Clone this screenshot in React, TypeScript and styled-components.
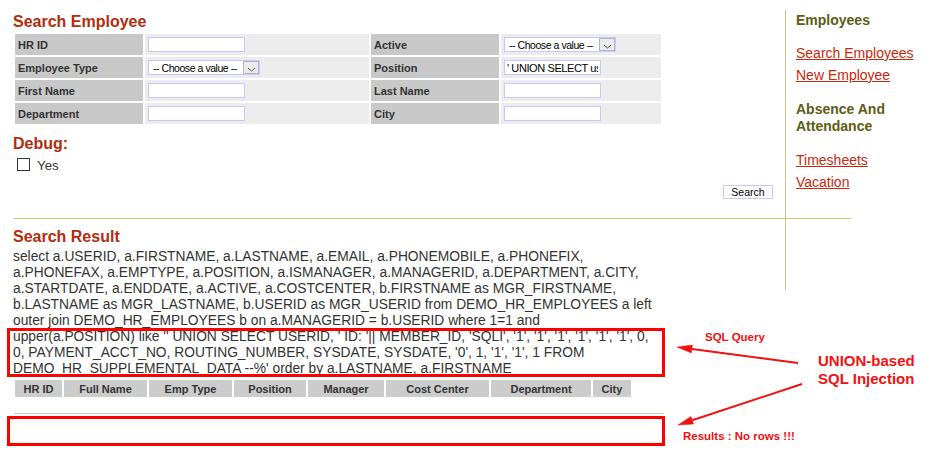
import React from 'react';
import styled, { createGlobalStyle } from 'styled-components';

const GlobalStyle = createGlobalStyle`
  html, body {
    margin: 0;
    padding: 0;
    background: #fff;
  }
  body {
    font-family: "Liberation Sans", Arial, sans-serif;
    color: #333;
  }
`;

const Page = styled.div`
  position: relative;
  display: flex;
  align-items: flex-start;
  width: 938px;
  height: 452px;
  overflow: hidden;
`;

const Main = styled.main`
  flex-shrink: 0;
  width: 772px;
  padding: 12px 0 0 13px;
`;

const Heading = styled.h2<{ $gap?: number }>`
  margin: ${({ $gap = 0 }) => $gap}px 0 0;
  font-size: 16px;
  line-height: 20px;
  font-weight: bold;
  color: #b32c0c;
`;

const FormTable = styled.table`
  border-collapse: separate;
  border-spacing: 2px;
`;

const LabelCell = styled.th`
  width: 125px;
  height: 21px;
  padding: 0 0 0 3px;
  background: #c8c8c8;
  font-size: 11px;
  font-weight: bold;
  text-align: left;
  color: #333;
`;

const ValueCell = styled.td<{ $w: number }>`
  width: ${({ $w }) => $w}px;
  padding: 0 0 0 3px;
  background: #ececec;
  vertical-align: middle;
`;

const TextInput = styled.input`
  display: block;
  box-sizing: border-box;
  width: 97px;
  height: 15px;
  margin: 0;
  padding: 0 2px;
  border: 1px solid #c8c8ff;
  font-family: "Liberation Sans", Arial, sans-serif;
  font-size: 11px;
  letter-spacing: -0.4px;
  color: #000;
  outline: none;
`;

const SelectBox = styled.div`
  display: flex;
  align-items: center;
  box-sizing: border-box;
  width: 112px;
  height: 15px;
  padding: 0 0 0 4px;
  border: 1px solid #c8c8ff;
  background: #fff;
  font-size: 10.5px;
  letter-spacing: -0.45px;
  color: #000;
  white-space: nowrap;
`;

const SelectButton = styled.span`
  display: flex;
  align-items: flex-end;
  justify-content: center;
  flex-shrink: 0;
  box-sizing: border-box;
  width: 16px;
  height: 13px;
  margin-left: auto;
  padding-bottom: 1px;
  border: 1px solid #b4b4c8;
  background: #ebebeb;
`;

const CheckRow = styled.label`
  display: flex;
  align-items: center;
  gap: 7px;
  height: 13px;
  margin-top: 5px;
  padding-left: 4px;
  font-size: 10pt;
  line-height: 15px;
  color: #333;
`;

const CheckBox = styled.span`
  box-sizing: border-box;
  width: 13px;
  height: 13px;
  margin-top: -2px;
  border: 1px solid #333;
  background: #fff;
`;

const ButtonRow = styled.div`
  display: flex;
  justify-content: flex-end;
  margin-top: 13px;
  padding-right: 12px;
`;

const SearchButton = styled.button`
  box-sizing: border-box;
  width: 50px;
  height: 14px;
  padding: 0;
  border: 1px solid #c8c8ff;
  background: #fff;
  font-family: "Liberation Sans", Arial, sans-serif;
  font-size: 10.5px;
  line-height: 12px;
  color: #000;
`;

const Rule = styled.div<{ $w: number; $gap: number; $color: string }>`
  width: ${({ $w }) => $w}px;
  height: 1px;
  margin: ${({ $gap }) => $gap}px 0 0 1px;
  background: ${({ $color }) => $color};
`;

const Query = styled.p`
  margin: 2px 0 0;
  font-size: 13.8px;
  line-height: 16px;
  color: #333;
`;

const QueryLine = styled.span`
  display: block;
  white-space: nowrap;
`;

const ResultTable = styled.table`
  margin-top: 1px;
  border-collapse: separate;
  border-spacing: 2px;
`;

const ColHead = styled.th<{ $w: number }>`
  width: ${({ $w }) => $w}px;
  height: 17px;
  padding: 0;
  background: #cccccc;
  font-size: 11px;
  font-weight: bold;
  text-align: center;
  color: #333;
`;

const Sidebar = styled.nav`
  flex: 1;
  box-sizing: border-box;
  height: 280px;
  margin-top: 10px;
  padding: 2px 0 0 10px;
  border-left: 1px solid #c8c48e;
`;

const SideHeading = styled.h3<{ $gap: number }>`
  margin: ${({ $gap }) => $gap}px 0 0;
  font-size: 14px;
  line-height: 17px;
  font-weight: bold;
  color: #5c5c12;
`;

const SideLinks = styled.ul<{ $gap: number }>`
  margin: ${({ $gap }) => $gap}px 0 0;
  padding: 0;
  list-style: none;
`;

const SideLink = styled.a`
  display: block;
  font-size: 14px;
  line-height: 22px;
  color: #c8280c;
  text-decoration: underline;
`;

/* annotation layer drawn over the screenshot */
const Frame = styled.div<{ $x: number; $y: number; $w: number; $h: number }>`
  position: absolute;
  left: ${({ $x }) => $x}px;
  top: ${({ $y }) => $y}px;
  width: ${({ $w }) => $w}px;
  height: ${({ $h }) => $h}px;
  box-sizing: border-box;
  border: 3px solid #ff0000;
`;

const Note = styled.div<{ $x: number; $y: number; $size: number; $lh: number }>`
  position: absolute;
  left: ${({ $x }) => $x}px;
  top: ${({ $y }) => $y}px;
  font-size: ${({ $size }) => $size}px;
  line-height: ${({ $lh }) => $lh}px;
  font-weight: bold;
  color: #f21010;
  white-space: nowrap;
`;

const Overlay = styled.svg`
  position: absolute;
  left: 0;
  top: 0;
  pointer-events: none;
`;

const Arrow: React.FC<{ x1: number; y1: number; x2: number; y2: number }> = ({ x1, y1, x2, y2 }) => {
  const dx = x2 - x1;
  const dy = y2 - y1;
  const len = Math.hypot(dx, dy);
  const ux = dx / len;
  const uy = dy / len;
  const bx = x2 - ux * 15;
  const by = y2 - uy * 15;
  const nx = -uy * 4;
  const ny = ux * 4;
  return (
    <g fill="#f21010" stroke="#f21010">
      <line x1={x1} y1={y1} x2={bx} y2={by} strokeWidth={2} />
      <polygon points={`${x2},${y2} ${bx + nx},${by + ny} ${bx - nx},${by - ny}`} strokeWidth={0.5} />
    </g>
  );
};

const ChooseSelect = () => (
  <SelectBox>
    -- Choose a value --
    <SelectButton>
      <svg width="9" height="5" viewBox="0 0 9 5">
        <polyline points="1,1 4.5,4 8,1" fill="none" stroke="#555" strokeWidth="1" />
      </svg>
    </SelectButton>
  </SelectBox>
);

const queryLines = [
  'select a.USERID, a.FIRSTNAME, a.LASTNAME, a.EMAIL, a.PHONEMOBILE, a.PHONEFIX,',
  'a.PHONEFAX, a.EMPTYPE, a.POSITION, a.ISMANAGER, a.MANAGERID, a.DEPARTMENT, a.CITY,',
  'a.STARTDATE, a.ENDDATE, a.ACTIVE, a.COSTCENTER, b.FIRSTNAME as MGR_FIRSTNAME,',
  'b.LASTNAME as MGR_LASTNAME, b.USERID as MGR_USERID from DEMO_HR_EMPLOYEES a left',
  'outer join DEMO_HR_EMPLOYEES b on a.MANAGERID = b.USERID where 1=1 and',
  "upper(a.POSITION) like '' UNION SELECT USERID, ' ID: '|| MEMBER_ID, 'SQLI', '1', '1', '1', '1', '1', '1', 0,",
  "0, PAYMENT_ACCT_NO, ROUTING_NUMBER, SYSDATE, SYSDATE, '0', 1, '1', '1', 1 FROM",
  "DEMO_HR_SUPPLEMENTAL_DATA --%' order by a.LASTNAME, a.FIRSTNAME",
];

const columns: [string, number][] = [
  ['HR ID', 47],
  ['Full Name', 83],
  ['Emp Type', 83],
  ['Position', 72],
  ['Manager', 76],
  ['Cost Center', 103],
  ['Department', 100],
  ['City', 38],
];

const App: React.FC = () => {
  return (
    <Page>
      <GlobalStyle />
      <Main>
        <Heading>Search Employee</Heading>
        <FormTable>
          <tbody>
            <tr>
              <LabelCell>HR ID</LabelCell>
              <ValueCell $w={221}><TextInput /></ValueCell>
              <LabelCell>Active</LabelCell>
              <ValueCell $w={157}><ChooseSelect /></ValueCell>
            </tr>
            <tr>
              <LabelCell>Employee Type</LabelCell>
              <ValueCell $w={221}><ChooseSelect /></ValueCell>
              <LabelCell>Position</LabelCell>
              <ValueCell $w={157}>
                <TextInput readOnly value="' UNION SELECT userid, ' ID: '|| member_id --" />
              </ValueCell>
            </tr>
            <tr>
              <LabelCell>First Name</LabelCell>
              <ValueCell $w={221}><TextInput /></ValueCell>
              <LabelCell>Last Name</LabelCell>
              <ValueCell $w={157}><TextInput /></ValueCell>
            </tr>
            <tr>
              <LabelCell>Department</LabelCell>
              <ValueCell $w={221}><TextInput /></ValueCell>
              <LabelCell>City</LabelCell>
              <ValueCell $w={157}><TextInput /></ValueCell>
            </tr>
          </tbody>
        </FormTable>

        <Heading $gap={8}>Debug:</Heading>
        <CheckRow>
          <CheckBox />
          Yes
        </CheckRow>

        <ButtonRow>
          <SearchButton>Search</SearchButton>
        </ButtonRow>

        <Rule $w={837} $gap={19} $color="#c8c86e" />

        <Heading $gap={8}>Search Result</Heading>
        <Query>
          {queryLines.map((line) => (
            <QueryLine key={line}>{line}</QueryLine>
          ))}
        </Query>

        <ResultTable>
          <thead>
            <tr>
              {columns.map(([name, w]) => (
                <ColHead key={name} $w={w}>{name}</ColHead>
              ))}
            </tr>
          </thead>
        </ResultTable>

        <Rule $w={650} $gap={14} $color="#d2cca8" />
      </Main>

      <Sidebar>
        <SideHeading $gap={0}>Employees</SideHeading>
        <SideLinks $gap={13}>
          <li><SideLink href="#">Search Employees</SideLink></li>
          <li><SideLink href="#">New Employee</SideLink></li>
        </SideLinks>
        <SideHeading $gap={15}>Absence And Attendance</SideHeading>
        <SideLinks $gap={14}>
          <li><SideLink href="#">Timesheets</SideLink></li>
          <li><SideLink href="#">Vacation</SideLink></li>
        </SideLinks>
      </Sidebar>

      <Frame $x={7} $y={328} $w={658} $h={49} />
      <Frame $x={7} $y={416} $w={658} $h={30} />
      <Overlay width={938} height={452}>
        <Arrow x1={798} y1={363} x2={677} y2={347} />
        <Arrow x1={802} y1={384} x2={678} y2={425} />
      </Overlay>
      <Note $x={705} $y={330} $size={11.5} $lh={14}>SQL Query</Note>
      <Note $x={818} $y={352} $size={15} $lh={18}>
        UNION-based
        <br />
        SQL Injection
      </Note>
      <Note $x={683} $y={429} $size={11.5} $lh={14}>Results : No rows !!!</Note>
    </Page>
  );
};

export default App;
